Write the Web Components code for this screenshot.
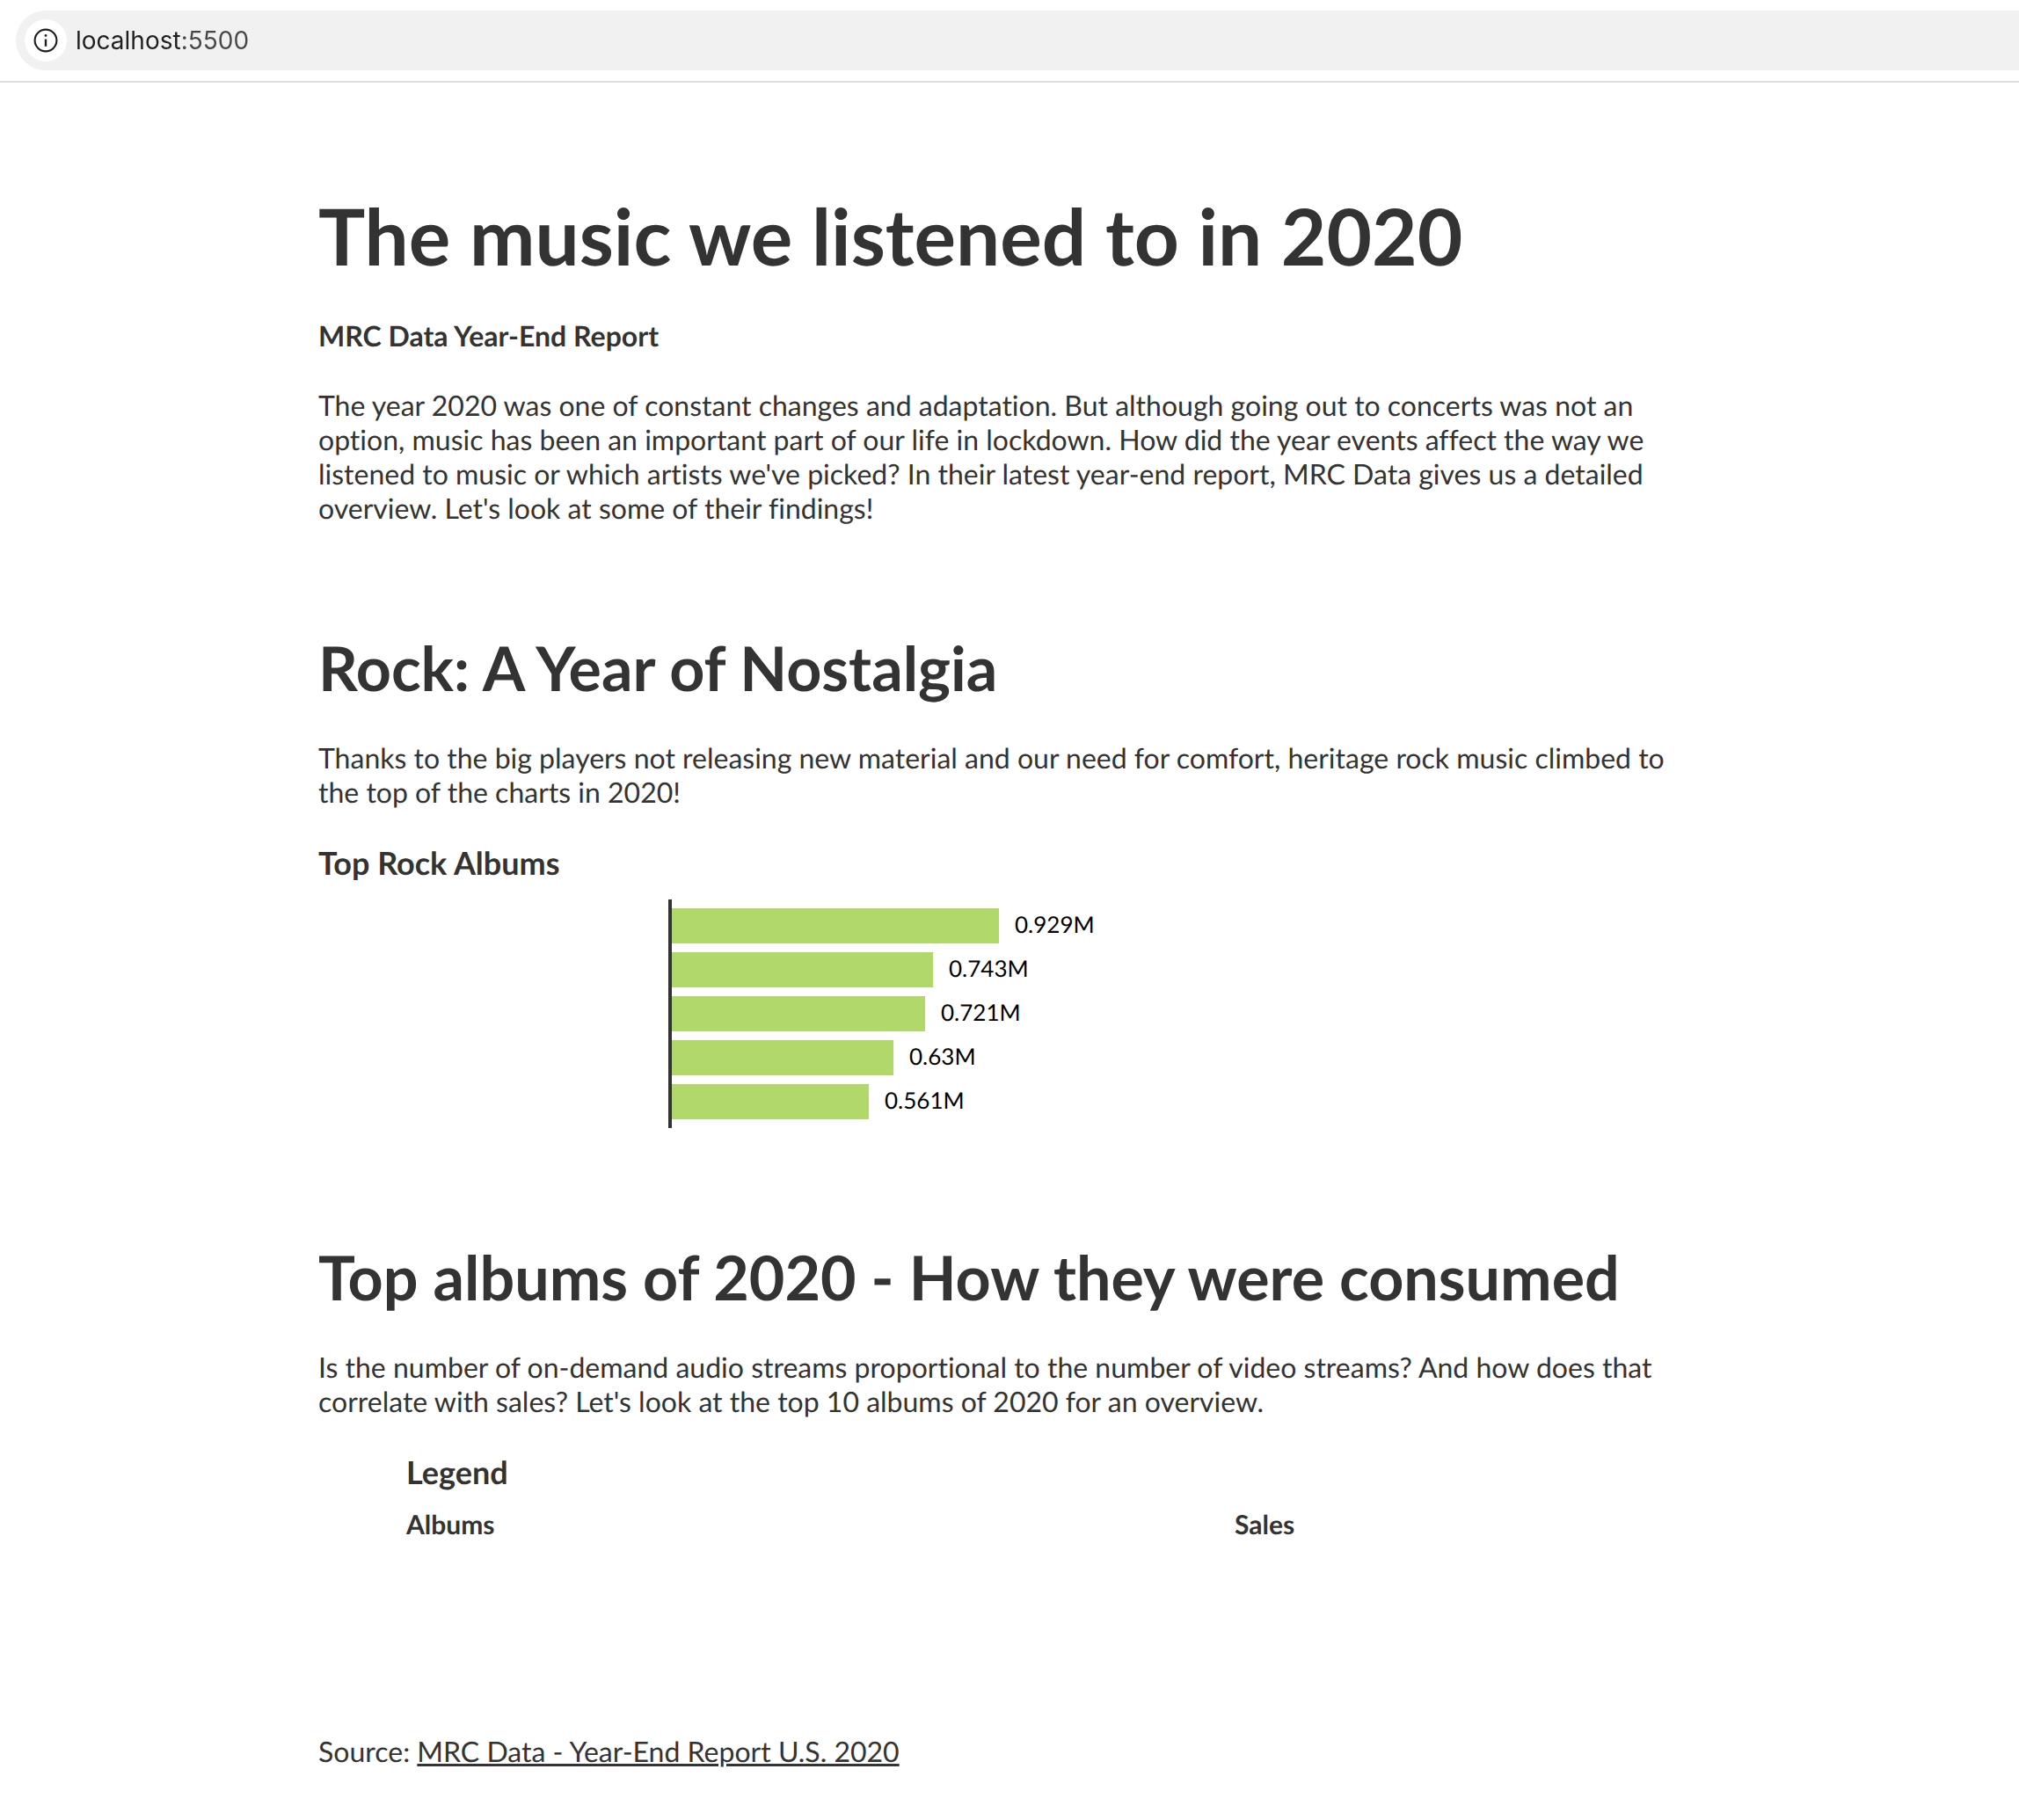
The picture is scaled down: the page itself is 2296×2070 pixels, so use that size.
<!DOCTYPE html>
<html lang="en">
<head>
<meta charset="utf-8">
<title>The music we listened to in 2020</title>
<style>
  body { margin: 0; background: #fff; color: #333; font: 32px/39px Lato, "Liberation Sans", sans-serif; font-variant-ligatures: no-common-ligatures; text-rendering: geometricPrecision; }
</style>
</head>
<body>
<address-bar value="localhost:5500"></address-bar>
<report-page>
  <report-intro>
    <span slot="title">The music we listened to in 2020</span>
    <span slot="subtitle">MRC Data Year-End Report</span>
    The year 2020 was one of constant changes and adaptation. But although going out to concerts was not an option, music has been an important part of our life in lockdown. How did the year events affect the way we listened to music or which artists we've picked? In their latest year-end report, MRC Data gives us a detailed overview. Let's look at some of their findings!
  </report-intro>
  <report-section>
    <span slot="title">Rock: A Year of Nostalgia</span>
    Thanks to the big players not releasing new material and our need for comfort, heritage rock music climbed to the top of the charts in 2020!
    <bar-chart slot="figure" heading="Top Rock Albums" values="0.929 0.743 0.721 0.63 0.561"></bar-chart>
  </report-section>
  <report-section>
    <span slot="title">Top albums of 2020 - How they were consumed</span>
    Is the number of on-demand audio streams proportional to the number of video streams? And how does that correlate with sales? Let's look at the top 10 albums of 2020 for an overview.
    <chart-legend slot="figure"></chart-legend>
  </report-section>
  <source-note slot="source"></source-note>
</report-page>
<script>
  const define = (name, html, setup) => customElements.define(name, class extends HTMLElement {
    constructor() {
      super();
      const template = document.createElement('template');
      template.innerHTML = html;
      this.attachShadow({ mode: 'open' }).append(template.content.cloneNode(true));
    }
    connectedCallback() { if (setup) setup(this, this.shadowRoot); }
  });

  define('address-bar', `
    <style>
      :host { display: block; padding: 12px 0 12px 18px; border-bottom: 2px solid #dedede; }
      form { display: flex; align-items: center; gap: 10px; height: 68px; padding-left: 10px; background: #f1f1f1; border-radius: 34px 0 0 34px; }
      button { flex: none; display: grid; place-items: center; width: 48px; height: 48px; padding: 0; border: 0; border-radius: 50%; background: #fff; color: #1f1f1f; }
      input { flex: 1; min-width: 0; height: 40px; padding: 0; border: 0; outline: 0; color: #1f1f1f; font: 28px/40px Inter, "Liberation Sans", sans-serif;
        background: linear-gradient(90deg, #1f1f1f 119px, #474747 119px); -webkit-background-clip: text; background-clip: text; -webkit-text-fill-color: transparent; }
    </style>
    <form>
      <button type="button" aria-label="View site information">
        <svg width="28" height="28" viewBox="0 0 28 28" fill="none" stroke="currentColor" aria-hidden="true">
          <circle cx="14" cy="14" r="12.4" stroke-width="2.1"/>
          <path d="M14 12.6V20.8" stroke-width="2.4"/>
          <circle cx="14" cy="8.4" r="1.4" fill="currentColor" stroke="none"/>
        </svg>
      </button>
      <input type="text" aria-label="Address" spellcheck="false">
    </form>`, (host, root) => { root.querySelector('input').value = host.getAttribute('value'); });

  define('report-page', `
    <style>
      :host { display: block; padding: 120px 32px 56px; }
      main, footer { max-width: 1572px; margin: 0 auto; }
      main { display: flex; flex-direction: column; gap: 120px; }
      footer { margin-top: 220px; }
    </style>
    <main><slot></slot></main>
    <footer><slot name="source"></slot></footer>`);

  define('report-intro', `
    <style>
      :host { display: block; }
      header { display: flex; flex-direction: column; gap: 40px; max-width: 1540px; }
      h1, h2, p { margin: 0; }
      h1 { font-size: 89px; line-height: 108px; }
      h2 { font-size: 32px; line-height: 39px; }
    </style>
    <header>
      <h1><slot name="title"></slot></h1>
      <h2><slot name="subtitle"></slot></h2>
      <p><slot></slot></p>
    </header>`);

  define('report-section', `
    <style>
      :host { display: block; }
      section { display: flex; flex-direction: column; gap: 40px; }
      h2, p { margin: 0; }
      h2 { font-size: 70px; line-height: 85px; }
      p { max-width: 1540px; }
    </style>
    <section>
      <h2><slot name="title"></slot></h2>
      <p><slot></slot></p>
      <slot name="figure"></slot>
    </section>`);

  define('bar-chart', `
    <style>
      :host { display: block; }
      h3 { margin: 0 0 20px; font-size: 36px; line-height: 43px; }
      ul { display: flex; flex-direction: column; gap: 10px; margin: 0 0 7px 398px; padding: 10px 0; border-left: 4px solid #333; list-style: none; }
      li { display: flex; align-items: center; gap: 18px; height: 40px; }
      .bar { height: 40px; background: #b1d86a; }
      .value { padding-bottom: 4px; color: #000; font-size: 26px; line-height: 31px; }
    </style>
    <h3></h3>
    <ul></ul>`, (host, root) => {
      const pixelsPerMillion = 400;
      root.querySelector('h3').textContent = host.getAttribute('heading');
      root.querySelector('ul').replaceChildren(...host.getAttribute('values').split(' ').map(value => {
        const row = document.createElement('li');
        const bar = document.createElement('span');
        const label = document.createElement('span');
        bar.className = 'bar';
        bar.style.width = Math.round(value * pixelsPerMillion) + 'px';
        label.className = 'value';
        label.textContent = value + 'M';
        row.append(bar, label);
        return row;
      }));
    });

  define('chart-legend', `
    <style>
      :host { display: block; margin-left: 100px; }
      h3, h4 { margin: 0; }
      h3 { margin-bottom: 20px; font-size: 36px; line-height: 43px; }
      h4 { font-size: 30px; line-height: 36px; }
      div { display: grid; grid-template-columns: 942px 1fr; }
    </style>
    <h3>Legend</h3>
    <div><h4>Albums</h4><h4>Sales</h4></div>`);

  define('source-note', `
    <style>
      :host { display: block; }
      p { margin: 0; }
      a { color: inherit; text-decoration-thickness: 3px; }
    </style>
    <p>Source: <a href="#report">MRC Data - Year-End Report U.S. 2020</a></p>`);
</script>
</body>
</html>
